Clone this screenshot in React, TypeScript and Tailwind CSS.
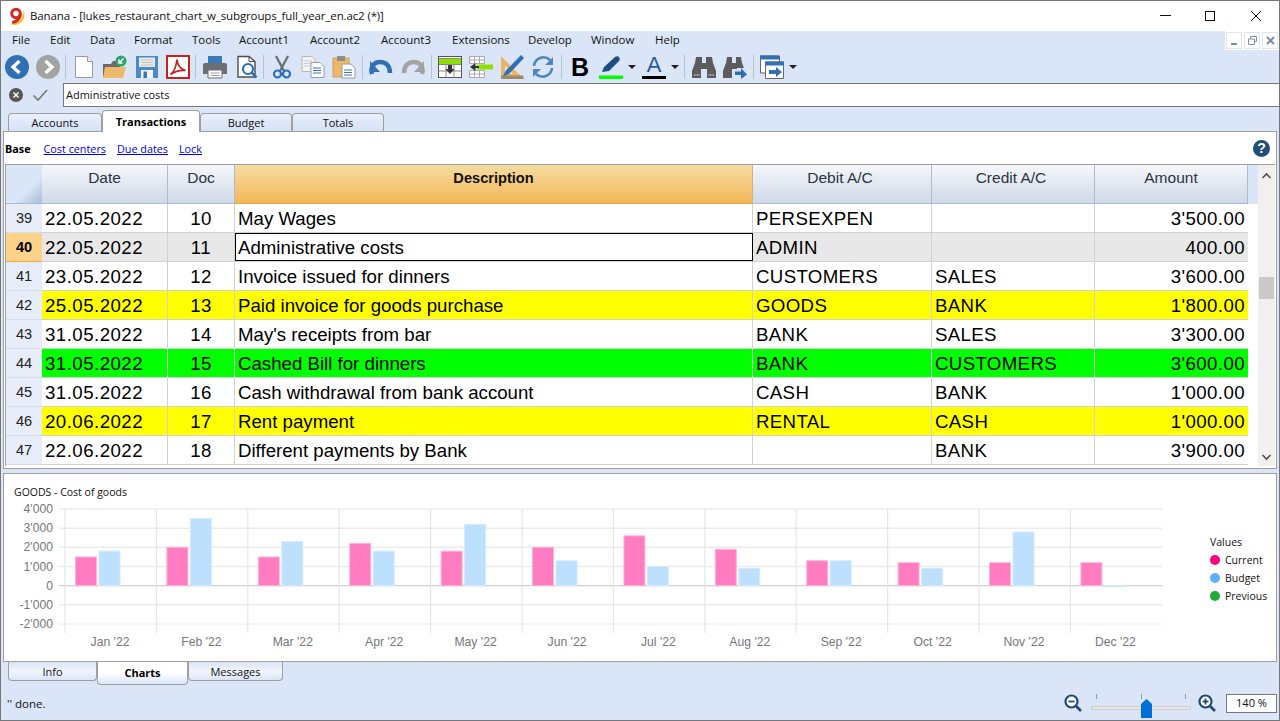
import React from 'react';

const ui = "font-['Open_Sans',sans-serif]";
const arial = "font-['Liberation_Sans',Arial,sans-serif]";

const rows = [
  { n: 39, date: '22.05.2022', doc: '10', desc: 'May Wages', debit: 'PERSEXPEN', credit: '', amount: "3'500.00", bg: 'bg-white' },
  { n: 40, date: '22.05.2022', doc: '11', desc: 'Administrative costs', debit: 'ADMIN', credit: '', amount: '400.00', bg: 'bg-[#e8e8e8]', active: true },
  { n: 41, date: '23.05.2022', doc: '12', desc: 'Invoice issued for dinners', debit: 'CUSTOMERS', credit: 'SALES', amount: "3'600.00", bg: 'bg-white' },
  { n: 42, date: '25.05.2022', doc: '13', desc: 'Paid invoice for goods purchase', debit: 'GOODS', credit: 'BANK', amount: "1'800.00", bg: 'bg-[#ffff00]' },
  { n: 43, date: '31.05.2022', doc: '14', desc: "May's receipts from bar", debit: 'BANK', credit: 'SALES', amount: "3'300.00", bg: 'bg-white' },
  { n: 44, date: '31.05.2022', doc: '15', desc: 'Cashed Bill for dinners', debit: 'BANK', credit: 'CUSTOMERS', amount: "3'600.00", bg: 'bg-[#00ff00]' },
  { n: 45, date: '31.05.2022', doc: '16', desc: 'Cash withdrawal from bank account', debit: 'CASH', credit: 'BANK', amount: "1'000.00", bg: 'bg-white' },
  { n: 46, date: '20.06.2022', doc: '17', desc: 'Rent payment', debit: 'RENTAL', credit: 'CASH', amount: "1'000.00", bg: 'bg-[#ffff00]' },
  { n: 47, date: '22.06.2022', doc: '18', desc: 'Different payments by Bank', debit: '', credit: 'BANK', amount: "3'900.00", bg: 'bg-white' },
];

const months = ['Jan', 'Feb', 'Mar', 'Apr', 'May', 'Jun', 'Jul', 'Aug', 'Sep', 'Oct', 'Nov', 'Dec'];
const current = [1500, 2000, 1500, 2200, 1800, 2000, 2600, 1900, 1300, 1200, 1200, 1200];
const budget = [1800, 3500, 2300, 1800, 3200, 1300, 1000, 900, 1300, 900, 2800, -60];
const yTicks = [["4'000", 4000], ["3'000", 3000], ["2'000", 2000], ["1'000", 1000], ['0', 0], ["-1'000", -1000], ["-2'000", -2000]] as const;

function Sep() {
  return <div className="w-px h-[24px] bg-[#b8c2d2]" />;
}

function DropArrow({ cls }: { cls: string }) {
  return <div className={`w-0 h-0 border-x-[4px] border-x-transparent border-t-[4px] border-t-[#222] ${cls}`} />;
}

function Ico({ w = 24, cls = '', children }: { w?: number; cls?: string; children: React.ReactNode }) {
  return (
    <svg width={w} height={24} viewBox={`0 0 ${w} 24`} className={`shrink-0 ${cls}`}>
      {children}
    </svg>
  );
}

function Toolbar() {
  return (
    <div className="h-[32px] pt-[2px] flex items-center bg-[#dae5f8]">
      {/* nav */}
      <Ico cls="ml-[4px]">
        <circle cx="12" cy="12" r="12" fill="#2f6fb2" />
        <polyline points="14.5,6 8,12 14.5,18" fill="none" stroke="#fff" strokeWidth="3.4" />
      </Ico>
      <Ico cls="ml-[7px]">
        <circle cx="12" cy="12" r="12" fill="#a3a3a3" />
        <polyline points="9.5,6 16,12 9.5,18" fill="none" stroke="#fff" strokeWidth="3.4" />
      </Ico>
      <div className="ml-[5px]"><Sep /></div>
      {/* new */}
      <Ico w={20} cls="ml-[8px]">
        <path d="M1.5 1.5h12l5 5v16h-17z" fill="#fff" stroke="#9a9a9a" />
        <path d="M13.5 1.5v5h5" fill="#eee" stroke="#9a9a9a" />
      </Ico>
      {/* open */}
      <Ico w={26} cls="ml-[8px]">
        <path d="M1 9h8l2-3h7v16H1z" fill="#6b6b6b" />
        <path d="M1 23l2-11h21l-3 11z" fill="#edb868" />
        <circle cx="19" cy="6" r="5.5" fill="#2fa56a" />
        <path d="M21.5 3.5l-4 4M17 4.5v3.5h3.5" fill="none" stroke="#fff" strokeWidth="1.5" />
      </Ico>
      {/* save */}
      <Ico cls="ml-[7px]">
        <path d="M1 1h22v22H1z" fill="#4a8ac8" />
        <path d="M4 2.500h16v9.500H4z" fill="#e9e9e9" />
        <path d="M6 5h12M6 7.500h12M6 10h12" stroke="#c4c4c4" />
        <path d="M6 15h12v8H6z" fill="#f4f4f4" />
        <path d="M8.500 16.500h3.500v6.500H8.500z" fill="#3a78b6" />
      </Ico>
      {/* pdf */}
      <Ico cls="ml-[7px]">
        <rect x="1" y="1" width="22" height="22" fill="#fff" stroke="#c4201d" strokeWidth="2" />
        <path d="M4.500 19.500c3-2 5.500-7.500 6.500-15 .5 6 3.500 9.500 8.500 11-5-.5-10 .5-15 4z" fill="none" stroke="#c4201d" strokeWidth="1.700" />
      </Ico>
      <div className="ml-[5px]"><Sep /></div>
      {/* print */}
      <Ico w={26} cls="ml-[6px]">
        <path d="M6 1h14v7H6z" fill="#3b7ab8" />
        <path d="M3 8h20a2 2 0 0 1 2 2v9H1v-9a2 2 0 0 1 2-2z" fill="#6a6f75" />
        <path d="M6 15h14v8H6z" fill="#fff" stroke="#6a6f75" />
        <path d="M8.500 18h9M8.500 20.500h9" stroke="#9aa0a6" />
      </Ico>
      {/* preview */}
      <Ico w={22} cls="ml-[8px]">
        <path d="M2 1.500h11l6 5V22H2z" fill="#fff" stroke="#4d4d4d" strokeWidth="1.400" />
        <path d="M13 1.500v5h6" fill="none" stroke="#4d4d4d" />
        <circle cx="12" cy="14" r="5" fill="#fff" stroke="#2f6fb2" strokeWidth="2.200" />
        <path d="M15.500 17.500l5 5" stroke="#2f6fb2" strokeWidth="2.600" />
      </Ico>
      <div className="ml-[5px]"><Sep /></div>
      {/* cut */}
      <Ico w={20} cls="ml-[8px]">
        <path d="M4 1l8 15M16 1L8 16" stroke="#6d7278" strokeWidth="2.400" fill="none" />
        <circle cx="5.500" cy="19" r="3.500" fill="none" stroke="#2f6fb2" strokeWidth="2.200" />
        <circle cx="14.500" cy="19" r="3.500" fill="none" stroke="#2f6fb2" strokeWidth="2.200" />
      </Ico>
      {/* copy */}
      <Ico cls="ml-[9px]">
        <path d="M1 1.500h10l3 3v12H1z" fill="#f3f3f3" stroke="#b9b9b9" />
        <path d="M3 6h8M3 8.500h8M3 11h8" stroke="#bcd0e6" />
        <path d="M10 7.500h9l4 4v11H10z" fill="#fff" stroke="#9c9c9c" />
        <path d="M12 13h8M12 15.500h8M12 18h8" stroke="#3b7ab8" />
      </Ico>
      {/* paste */}
      <Ico cls="ml-[7px]">
        <path d="M1 3h16v19H1z" fill="#edb868" stroke="#c9a063" />
        <path d="M5 1h8v5H5z" fill="#8c8c8c" />
        <path d="M10 9h9l4 4v10H10z" fill="#fff" stroke="#9c9c9c" />
        <path d="M12 15h8M12 17.500h8M12 20h8" stroke="#3b7ab8" />
      </Ico>
      <div className="ml-[6px]"><Sep /></div>
      {/* undo */}
      <Ico cls="ml-[6px]">
        <path d="M3 19c-2-7 2-12 8-12 6 0 10 4 10 11" fill="none" stroke="#2f6fb2" strokeWidth="4.500" />
        <path d="M1 6v11h10z" fill="#2f6fb2" />
      </Ico>
      {/* redo */}
      <Ico cls="ml-[8px]">
        <path d="M21 19c2-7-2-12-8-12-6 0-10 4-10 11" fill="none" stroke="#a3a3a3" strokeWidth="4.500" />
        <path d="M23 6v11H13z" fill="#a3a3a3" />
      </Ico>
      <div className="ml-[6px]"><Sep /></div>
      {/* insert row */}
      <Ico cls="ml-[6px]">
        <rect x=".5" y="1.500" width="23" height="21" fill="#fff" stroke="#555" />
        <rect x="1" y="4" width="22" height="5" fill="#8fe000" />
        <path d="M1 3.500h22M1 9.500h22M1 16h22M8 9.500v13M16 9.500v13" stroke="#888" />
        <path d="M10 10h4v4h2.500L12 19l-4.500-5H10z" fill="#333" />
      </Ico>
      {/* delete row */}
      <Ico cls="ml-[7px]">
        <path d="M.5 1.500h15v7H.5zM.5 15.500h15v7H.5zM5.500 1.500v7M10.500 1.500v7M.5 5h15M5.500 15.500v7M10.500 15.500v7M.5 19h15" fill="#fff" stroke="#aaa" />
        <rect x="8" y="9.500" width="16" height="5" fill="#8fe000" />
        <path d="M1 12l5.500-4v8z" fill="#333" />
        <path d="M5 11h5v2H5z" fill="#333" />
      </Ico>
      {/* ruler & pencil */}
      <Ico cls="ml-[7px]">
        <path d="M1 1l22 22H1z" fill="#ebb566" />
        <path d="M5 11l8 8H5z" fill="#dae5f8" />
        <path d="M1 20.500h22L24 24H1z" fill="#9a8a70" />
        <path d="M21 0l3 3L9 19l-6 2.500L5.500 16z" fill="#2f6fb2" />
      </Ico>
      {/* refresh */}
      <Ico cls="ml-[7px]">
        <path d="M3 11a9.500 9.500 0 0 1 16-6" fill="none" stroke="#4a86bf" strokeWidth="2.600" />
        <path d="M21 13a9.500 9.500 0 0 1-16 6" fill="none" stroke="#4a86bf" strokeWidth="2.600" />
        <path d="M22 2v8h-8z" fill="#4a86bf" />
        <path d="M2 22v-8h8z" fill="#4a86bf" />
      </Ico>
      <div className="ml-[6px]"><Sep /></div>
      {/* bold */}
      <div className={`ml-[9px] w-[16px] text-[25px] leading-[24px] font-bold text-black ${arial}`}>B</div>
      {/* highlighter */}
      <Ico cls="ml-[12px]">
        <path d="M3 17l2-5L16 2c1-1 3-1 4 0 1 1 1 3 0 4L10 16z" fill="#1f4e84" />
        <path d="M0 20.500h24V24H0z" fill="#00ff00" />
      </Ico>
      <DropArrow cls="ml-[5px]" />
      {/* font colour */}
      <div className="ml-[6px] w-[24px] h-[26px] flex flex-col items-center">
        <div className={`text-[22px] leading-[22px] h-[22px] text-[#2a5a94] ${arial}`}>A</div>
        <div className="w-[24px] h-[3px] bg-black" />
      </div>
      <DropArrow cls="ml-[5px]" />
      <div className="ml-[5px]"><Sep /></div>
      {/* binoculars */}
      <Ico cls="ml-[7px]">
        <path d="M3 8l1-6h6v6h4V2h6l1 6 3 8v7h-9v-9h-6v9H0v-7z" fill="#5c5c5c" />
        <path d="M2 19h6v2H2zM16 19h6v2h-6z" fill="#8a8a8a" />
      </Ico>
      <Ico cls="ml-[7px]">
        <path d="M3 8l1-6h5v6h4V2h5l1 6 2 5h-7v1H9v9H0v-7z" fill="#5c5c5c" />
        <path d="M12 16.500h6V13l6 6.500L18 24v-4h-6z" fill="#2f6fb2" />
      </Ico>
      <div className="ml-[6px]"><Sep /></div>
      {/* windows */}
      <Ico cls="ml-[6px]">
        <path d="M.5 1h19v17H.5z" fill="#fff" stroke="#666" />
        <path d="M0 .5h19v4H0z" fill="#2f6fb2" />
        <path d="M5.500 7h18v16.500h-18z" fill="#fff" stroke="#666" />
        <path d="M5 6.500h19v4H5z" fill="#2f6fb2" />
        <path d="M9 15h7v-3l6 5-6 5v-3H9z" fill="#2f6fb2" />
      </Ico>
      <DropArrow cls="ml-[5px]" />
    </div>
  );
}

function TopTab({ label, active, cls }: { label: string; active?: boolean; cls: string }) {
  if (active) {
    return (
      <div className={`${cls} relative z-10 h-[22px] -mb-px bg-white border border-b-0 border-[#a0a0a0] rounded-t-[4px] flex items-start justify-center pt-[3px] text-[11px] font-bold text-black ${ui}`}>
        {label}
      </div>
    );
  }
  return (
    <div className={`${cls} h-[18px] pt-[1px] bg-gradient-to-b from-[#eaf0fb] to-[#d5e1f5] border border-b-0 border-[#a0a0a0] rounded-t-[4px] flex items-center justify-center text-[11px] text-[#111] ${ui}`}>
      {label}
    </div>
  );
}

function BottomTab({ label, active, cls }: { label: string; active?: boolean; cls: string }) {
  if (active) {
    return (
      <div className={`${cls} h-[23px] bg-gradient-to-b from-white via-white to-[#dae5f8] border border-t-0 border-[#a0a0a0] rounded-b-[4px] flex items-center justify-center pt-[1px] text-[11px] font-bold text-black ${ui}`}>
        {label}
      </div>
    );
  }
  return (
    <div className={`${cls} h-[19px] pt-[2px] bg-gradient-to-b from-[#d8e4f8] via-[#f3f6fd] to-[#dae5f8] border border-t-0 border-[#a0a0a0] rounded-b-[4px] flex items-center justify-center text-[11px] text-[#111] ${ui}`}>
      {label}
    </div>
  );
}

function HeadCell({ label, cls, orange }: { label: string; cls: string; orange?: boolean }) {
  return (
    <div
      className={`${cls} h-[39px] shrink-0 border-r border-b flex justify-center pt-[4px] leading-[18px] ${arial} ${
        orange
          ? 'text-[14.6px] bg-gradient-to-b from-[#f6dca0] to-[#f3b656] border-r-[#c9b48a] border-b-[#eca94a] font-bold text-[#111]'
          : 'text-[15.5px] bg-gradient-to-b from-[#f5f7fb] to-[#cfd9e7] border-r-[#a8bcd6] border-b-[#a8bcd6] text-[#2b3440]'
      }`}
    >
      {label}
    </div>
  );
}

function Table() {
  return (
    <div className="mx-[1px] border-t border-x border-[#a0a0a0] flex">
      <div className="w-[1252px] shrink-0">
        <div className="flex">
          <div className="w-[36px] h-[39px] shrink-0 bg-[linear-gradient(135deg,#dae5f8_62%,#a6bfd8_100%)] border-b border-[#a8bcd6]" />
          <HeadCell label="Date" cls="w-[126px]" />
          <HeadCell label="Doc" cls="w-[67px]" />
          <HeadCell label="Description" cls="w-[518px]" orange />
          <HeadCell label="Debit A/C" cls="w-[179px] pr-[4px]" />
          <HeadCell label="Credit A/C" cls="w-[163px] pr-[4px]" />
          <HeadCell label="Amount" cls="w-[153px]" />
          <div className="w-[10px] h-[39px] bg-[#dae5f8]" />
        </div>
        {rows.map((r) => (
          <div key={r.n} className={`flex h-[29px] text-[18.67px] leading-[30px] text-black ${arial}`}>
            <div
              className={`w-[36px] shrink-0 text-center border-b text-[14.6px] leading-[28px] ${
                r.active ? 'bg-[#fdd28a] border-[#f0a848] font-bold' : 'bg-[#e6edf8] border-[#d5deea] text-[#222]'
              }`}
            >
              {r.n}
            </div>
            <div className={`${r.bg} w-[126px] shrink-0 pl-[3px] tracking-[0.46px] border-r border-b border-[#d2d2d2]`}>{r.date}</div>
            <div className={`${r.bg} w-[67px] shrink-0 text-center tracking-[0.46px] border-r border-b border-[#d2d2d2]`}>{r.doc}</div>
            {r.active ? (
              <div className={`${r.bg} w-[518px] shrink-0 border-b border-[#d2d2d2]`}>
                <div className="h-[28px] bg-white border border-black pl-[2px] leading-[28px]">{r.desc}</div>
              </div>
            ) : (
              <div className={`${r.bg} w-[518px] shrink-0 pl-[3px] border-r border-b border-[#d2d2d2]`}>{r.desc}</div>
            )}
            <div className={`${r.bg} w-[179px] shrink-0 pl-[3px] tracking-[0.35px] border-r border-b border-[#d2d2d2]`}>{r.debit}</div>
            <div className={`${r.bg} w-[163px] shrink-0 pl-[3px] tracking-[0.35px] border-r border-b border-[#d2d2d2]`}>{r.credit}</div>
            <div className={`${r.bg} w-[153px] shrink-0 pr-[3px] text-right tracking-[0.4px] border-b border-[#d2d2d2]`}>{r.amount}</div>
          </div>
        ))}
        <div className="h-[1px]" />
      </div>
      {/* scrollbar */}
      <div className="w-[17px] shrink-0 bg-[#f0f0f0] flex flex-col items-center">
        <svg width="17" height="18" viewBox="0 0 17 18" className="mt-[1px]">
          <polyline points="4.500,12 8.500,8 12.500,12" fill="none" stroke="#505050" strokeWidth="1.600" />
        </svg>
        <div className="mt-[93px] w-[15px] h-[22px] bg-[#c9c9c9]" />
        <div className="flex-1" />
        <svg width="17" height="18" viewBox="0 0 17 18">
          <polyline points="4.500,7 8.500,11 12.500,7" fill="none" stroke="#505050" strokeWidth="1.600" />
        </svg>
      </div>
    </div>
  );
}

function Chart() {
  const y = (v: number) => 585.7 - v * 0.01917;
  const x = (i: number) => 65 + i * 91.4;
  return (
    <svg viewBox="4 474 1272 187" className="block w-[1272px] h-[187px]">
      <text x="14" y="496" fontSize="10.500" fontFamily="Open Sans, sans-serif" fill="#111">GOODS - Cost of goods</text>
      {yTicks.map(([label, v]) => (
        <g key={label}>
          <line x1="59" x2="1162" y1={y(v)} y2={y(v)} stroke={v === 0 ? '#c6c6c6' : '#ebebeb'} strokeWidth={v === 0 || v === -2000 ? 1 : 1.500} />
          <text x="53" y={y(v) + 4} textAnchor="end" fontSize="12.200" fontFamily="Liberation Sans, Arial, sans-serif" fill="#777">{label}</text>
        </g>
      ))}
      {months.map((_, i) => (
        <line key={i} x1={x(i)} x2={x(i)} y1="509" y2="633" stroke="#e6e6e6" strokeWidth="1.200" />
      ))}
      {months.map((m, i) => (
        <g key={m}>
          <rect x={x(i) + 10.500} y={y(current[i])} width="21" height={y(0) - y(current[i])} fill="#ff7cc0" stroke="#ffb3da" strokeWidth="1" />
          <rect
            x={x(i) + 34}
            y={budget[i] > 0 ? y(budget[i]) : y(0)}
            width="21"
            height={Math.abs(y(0) - y(budget[i]))}
            fill="#bde0ff"
            stroke="#d3eaff"
            strokeWidth="1"
          />
          <text x={x(i) + 45} y="646" textAnchor="middle" fontSize="12.200" fontFamily="Liberation Sans, Arial, sans-serif" fill="#777">{`${m} '22`}</text>
        </g>
      ))}
      <text x="1210" y="546" fontSize="10.500" fontFamily="Open Sans, sans-serif" fill="#111">Values</text>
      <circle cx="1215" cy="560" r="5" fill="#ff0080" />
      <text x="1225" y="564" fontSize="10.500" fontFamily="Open Sans, sans-serif" fill="#111">Current</text>
      <circle cx="1215" cy="578" r="5" fill="#5cb0ff" />
      <text x="1225" y="582" fontSize="10.500" fontFamily="Open Sans, sans-serif" fill="#111">Budget</text>
      <circle cx="1215" cy="596" r="5" fill="#22aa3a" />
      <text x="1225" y="600" fontSize="10.500" fontFamily="Open Sans, sans-serif" fill="#111">Previous</text>
    </svg>
  );
}

function Zoom({ plus, cls }: { plus?: boolean; cls: string }) {
  return (
    <svg width="18" height="18" viewBox="0 0 18 18" className={cls}>
      <circle cx="7.500" cy="7.500" r="6" fill="#fff" stroke="#1f4a78" strokeWidth="2.200" />
      <path d="M12 12l5 5" stroke="#1f4a78" strokeWidth="2.600" />
      <path d="M4.500 7.500h6" stroke="#1f4a78" strokeWidth="1.800" />
      {plus && <path d="M7.500 4.500v6" stroke="#1f4a78" strokeWidth="1.800" />}
    </svg>
  );
}

export default function App() {
  return (
    <div className={`w-[1280px] h-[721px] box-border overflow-hidden border border-[#777] bg-[#dae5f8] flex flex-col ${ui}`}>
      {/* title bar */}
      <div className="h-[30px] bg-white flex items-center shrink-0">
        <svg width="18" height="19" viewBox="0 0 18 19" className="ml-[7px] shrink-0">
          <path d="M2 17c6 2.500 12-.5 14-6 1-3 .5-6-.5-8 .5 6-4 12-13.500 14z" fill="#f2c53a" />
          <circle cx="8" cy="6.500" r="4.300" fill="none" stroke="#d8261c" strokeWidth="3" />
          <path d="M12.300 7c0 4-3 7.500-8 8.500" fill="none" stroke="#d8261c" strokeWidth="3" />
        </svg>
        <div className="ml-[4px] text-[11.500px] text-[#111] tracking-[-0.13px] whitespace-nowrap">Banana - [lukes_restaurant_chart_w_subgroups_full_year_en.ac2 (*)]</div>
        <div className="flex-1" />
        <svg width="103" height="12" viewBox="0 0 103 12" className="mr-[17px]">
          <path d="M1 5.500h11" stroke="#111" />
          <rect x="46.500" y="1.500" width="9" height="9" fill="none" stroke="#111" />
          <path d="M92 1l10 10M102 1L92 11" stroke="#111" />
        </svg>
      </div>
      {/* menu */}
      <div className="h-[19px] flex shrink-0">
        <div className="flex-1 pl-[11px] pb-[1px] grid grid-cols-[38px_40px_44px_58px_47px_71px_71px_71px_76px_63px_64px_auto] items-center text-[11.500px] text-[#111]">
          {['File', 'Edit', 'Data', 'Format', 'Tools', 'Account1', 'Account2', 'Account3', 'Extensions', 'Develop', 'Window', 'Help'].map((m) => (
            <div key={m}>{m}</div>
          ))}
        </div>
        <div className="w-[54px] bg-white flex gap-[2px] pt-[1px] pl-[1px]">
          <div className="w-[16px] h-[17px] border border-[#e4e4e4] flex items-end justify-center pb-[3px]">
            <div className="w-[6px] h-[2px] bg-[#7f8fa3]" />
          </div>
          <div className="w-[16px] h-[17px] border border-[#e4e4e4] flex items-center justify-center">
            <svg width="9" height="9" viewBox="0 0 9 9">
              <path d="M2.500 2.500V.5h6v5h-2M.5 3h6v5.500h-6z" fill="none" stroke="#7f8fa3" />
            </svg>
          </div>
          <div className="w-[16px] h-[17px] border border-[#e4e4e4] flex items-center justify-center">
            <svg width="9" height="9" viewBox="0 0 9 9">
              <path d="M1 1l7 7M8 1L1 8" stroke="#7f8fa3" strokeWidth="2" />
            </svg>
          </div>
        </div>
      </div>
      <Toolbar />
      {/* entry row */}
      <div className="h-[25px] flex shrink-0 items-end">
        <div className="w-[62px] h-[24px] flex items-center">
          <svg width="14" height="14" viewBox="0 0 14 14" className="ml-[8px]">
            <circle cx="7" cy="7" r="7" fill="#555" />
            <path d="M4.500 4.500l5 5M9.500 4.500l-5 5" stroke="#fff" strokeWidth="1.500" />
          </svg>
          <svg width="16" height="14" viewBox="0 0 16 14" className="ml-[9px]">
            <path d="M1.500 7.500l4.500 4.500 9-10" fill="none" stroke="#777" strokeWidth="1.600" />
          </svg>
        </div>
        <div className="flex-1 h-[24px] bg-white border border-[#777] border-r-0 flex items-center pl-[2px] pt-[1px] text-[11px] text-[#111]">Administrative costs</div>
      </div>
      {/* tabs */}
      <div className="h-[24px] pl-[7px] flex items-end shrink-0">
        <TopTab label="Accounts" cls="w-[94px]" />
        <TopTab label="Transactions" cls="w-[98px]" active />
        <TopTab label="Budget" cls="w-[92px]" />
        <TopTab label="Totals" cls="w-[92px]" />
      </div>
      {/* transactions panel */}
      <div className="mx-[2px] h-[338px] box-border bg-white border border-[#a0a0a0] shrink-0">
        <div className="h-[32px] flex items-center pl-[1px] pr-[6px] text-[10.800px]">
          <span className="mt-[2px] font-bold text-black">Base</span>
          <a className="mt-[2px] ml-[13px] text-[#0000ee] underline">Cost centers</a>
          <a className="mt-[2px] ml-[11px] text-[#0000ee] underline">Due dates</a>
          <a className="mt-[2px] ml-[11px] text-[#0000ee] underline">Lock</a>
          <div className="flex-1" />
          <div className={`w-[17px] h-[17px] rounded-full bg-[#1f4e79] text-white text-[14px] leading-[17px] font-bold text-center ${arial}`}>?</div>
        </div>
        <Table />
      </div>
      <div className="h-[4px] shrink-0" />
      {/* chart panel */}
      <div className="mx-[2px] h-[189px] box-border bg-white border border-[#a0a0a0] shrink-0">
        <Chart />
      </div>
      <div className="h-[23px] pl-[7px] flex items-start shrink-0">
        <BottomTab label="Info" cls="w-[89px]" />
        <BottomTab label="Charts" cls="w-[91px]" active />
        <BottomTab label="Messages" cls="w-[95px]" />
      </div>
      {/* status */}
      <div className="flex-1 flex items-center pl-[6px] text-[11.500px] text-[#111]">
        <div className="mt-[3px]">'' done.</div>
        <div className="flex-1" />
        <Zoom cls="" />
        <div className="ml-[9px] w-[100px] h-[24px] relative">
          <div className="absolute left-0 right-0 top-[15px] h-[4px] bg-[#e6e6e6] border border-[#cfcfcf]" />
          <div className="absolute left-[5px] top-[3px] w-px h-[5px] bg-[#999]" />
          <div className="absolute left-[50px] top-[3px] w-px h-[5px] bg-[#999]" />
          <div className="absolute left-[94px] top-[3px] w-px h-[5px] bg-[#999]" />
          <svg width="11" height="19" viewBox="0 0 11 19" className="absolute left-[50px] top-[8px]">
            <path d="M0 19V5l5.500-5L11 5v14z" fill="#0070d8" />
          </svg>
        </div>
        <Zoom plus cls="ml-[7px]" />
        <div className="ml-[10px] mr-[2px] mt-[2px] w-[51px] h-[19px] box-border bg-white border border-[#777] flex items-center justify-center text-[11px]">140 %</div>
      </div>
    </div>
  );
}
